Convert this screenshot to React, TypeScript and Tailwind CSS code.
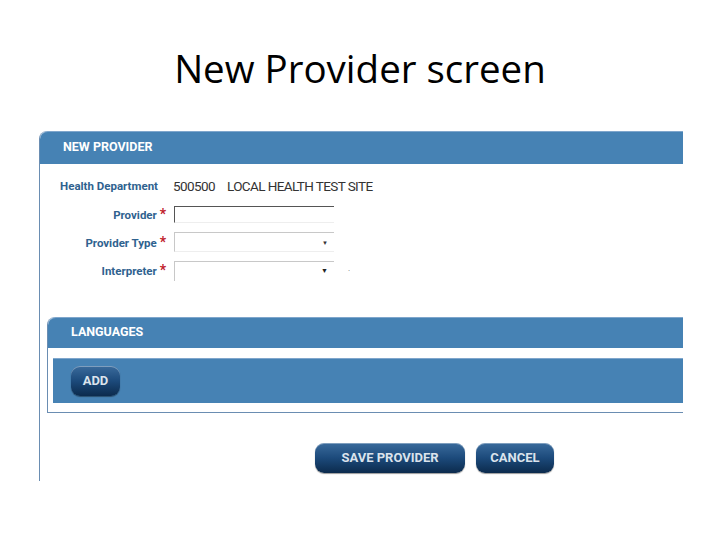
export default function App() {
  const cond = { fontFamily: 'Roboto, "Liberation Sans", sans-serif' }

  const btn =
    'flex items-center justify-center h-[30px] rounded-[9px] text-[13px] font-bold text-[#dbe3ec] bg-gradient-to-b from-[#3a6b9c] via-[#1c4a7b] to-[#0c2b4d] shadow-[inset_0_1px_0_rgba(255,255,255,0.35),0_1px_1px_rgba(0,0,0,0.4)]'

  const label = 'text-right text-[11.5px] font-bold text-[#2f628f] leading-none'

  return (
    <div className="w-[720px] h-[540px] bg-white overflow-hidden">
      <h1
        className="text-center text-[38.5px] leading-none pt-[49px] text-black"
        style={{ fontFamily: '"Open Sans", "Liberation Sans", sans-serif' }}
      >
        New Provider screen
      </h1>

      <div className="ml-[39px] mt-[43px] w-[644px] h-[350px] border-l border-[#6a8db2] rounded-tl-[8px]" style={cond}>
        {/* header */}
        <div className="h-[33px] bg-[#4682b4] rounded-tl-[8px] border-t border-[#7fa6cc] flex items-center pl-[23px] text-white text-[12.5px] font-bold">
          NEW PROVIDER
        </div>

        {/* form */}
        <div className="grid grid-cols-[126px_1fr] grid-rows-[27px_27px_29px_28px] gap-x-[8px] pt-[10px] items-center">
          <div className={`${label} pr-[8px]`}>Health Department</div>
          <div className="text-[13.5px] text-[#333] leading-none tracking-[-0.6px] -ml-[1px]">
            500500<span className="ml-[12px]">LOCAL HEALTH TEST SITE</span>
          </div>

          <div className={label}>
            Provider <span className="text-[#c0202a] text-[14px]">*</span>
          </div>
          <div className="w-[160px] h-[17px] border-t border-l border-[#555] border-b border-b-[#eee]" />

          <div className={label}>
            Provider Type <span className="text-[#c0202a] text-[14px]">*</span>
          </div>
          <div className="w-[160px] h-[20px] border-t border-l border-[#c8c8c8] border-b border-b-[#eee] flex items-center justify-end pr-[6px]">
            <span className="text-[6px] text-[#333]">▼</span>
          </div>

          <div className={label}>
            Interpreter <span className="text-[#c0202a] text-[14px]">*</span>
          </div>
          <div className="flex items-center">
            <div className="w-[160px] h-[20px] border-t border-l border-[#c8c8c8] flex items-center justify-end pr-[6px]">
              <span className="text-[7px] text-[#222]">▼</span>
            </div>
            <span className="ml-[14px] text-[8px] text-[#666]">·</span>
          </div>
        </div>

        {/* languages */}
        <div className="ml-[7px] mt-[32px] border-l border-b border-[#6a8db2] rounded-tl-[8px]">
          <div className="h-[31px] bg-[#4682b4] rounded-tl-[8px] border-t border-[#7fa6cc] flex items-center pl-[23px] text-white text-[12.5px] font-bold">
            LANGUAGES
          </div>
          <div className="pt-[10px] pb-[9px] pl-[5px]">
            <div className="h-[45px] bg-[#4682b4] border-t border-[#7fa6cc] flex items-center pl-[18px]">
              <button className={`${btn} w-[49px] h-[29px]`}>ADD</button>
            </div>
          </div>
        </div>

        {/* actions */}
        <div className="flex gap-[11px] pl-[275px] mt-[30px]">
          <button className={`${btn} w-[150px]`}>SAVE PROVIDER</button>
          <button className={`${btn} w-[78px]`}>CANCEL</button>
        </div>
      </div>
    </div>
  )
}
